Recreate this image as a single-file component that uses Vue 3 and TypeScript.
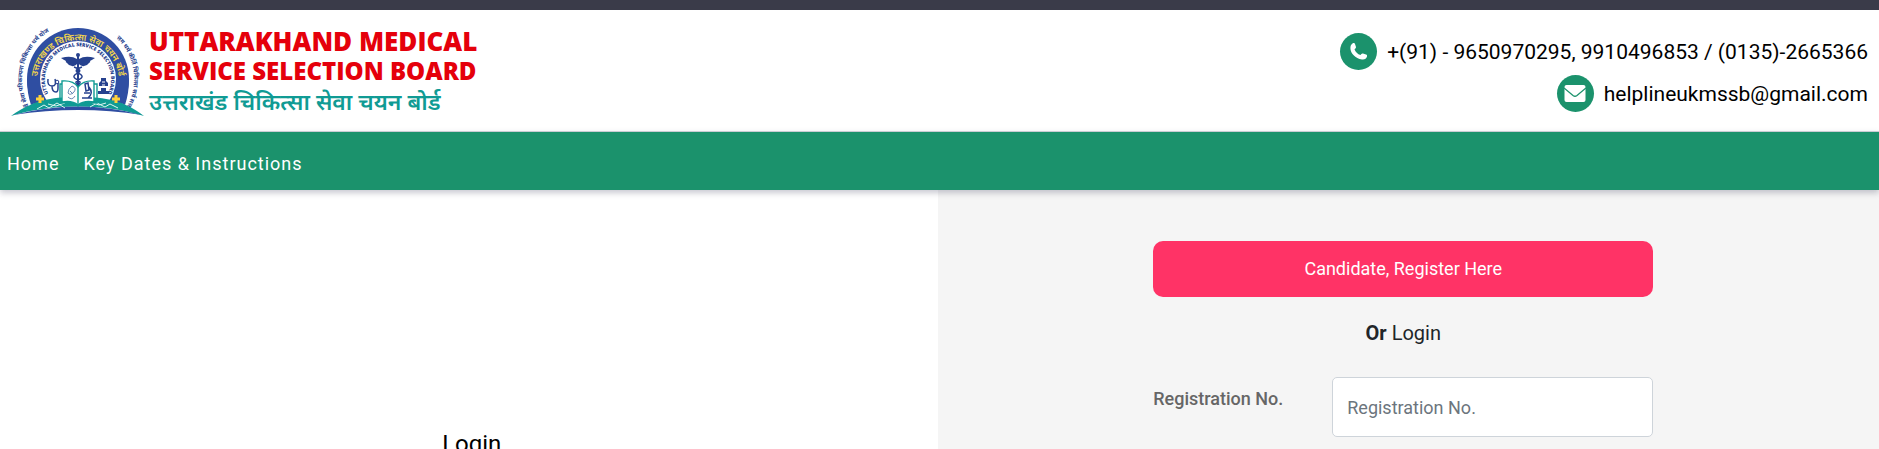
<script setup lang="ts">
import { ref } from 'vue'

interface NavLink {
  label: string
  href: string
}

const links: NavLink[] = [
  { label: 'Home', href: '#home' },
  { label: 'Key Dates & Instructions', href: '#key-dates' },
]

const registrationNo = ref('')
</script>

<template>
  <div class="page">
    <div class="topbar"></div>
    <header class="header">
      <a class="brand" href="#home">
        <svg class="emblem" viewBox="12 26 134 92" aria-hidden="true">
          <defs>
            <path id="arc-hindi" d="M40 94A41 41 0 1 1 118 94" />
            <path id="arc-english" d="M50 95A33 33 0 1 1 108 95" />
            <path id="arc-left" d="M30 106A56 56 0 0 1 51 31" />
            <path id="arc-right" d="M116 37A56 56 0 0 1 127 108" />
          </defs>
          <circle cx="79" cy="79" r="51" fill="#2f4ea2" />
          <circle cx="79" cy="79" r="38" fill="#fff" />
          <text class="motto" font-size="6"><textPath href="#arc-left" startOffset="50%" text-anchor="middle">सर्वे सेवा परिकल्पना चिकित्सा धर्म योजना</textPath></text>
          <text class="motto" font-size="6"><textPath href="#arc-right" startOffset="50%" text-anchor="middle">उत्तम धर्म कीर्ति चिकित्सा सर्व सत्तम</textPath></text>
          <text class="ring-hindi" font-size="9"><textPath href="#arc-hindi" startOffset="50%" text-anchor="middle">उत्तराखण्ड चिकित्सा सेवा चयन बोर्ड</textPath></text>
          <text class="ring-english" font-size="5"><textPath href="#arc-english" startOffset="50%" text-anchor="middle">UTTARAKHAND MEDICAL SERVICE SELECTION BOARD</textPath></text>
          <path d="M28 108Q79 90 130 108V118H28Z" fill="#fff" />
          <path d="M28 79h13v21l-9 5q-4-12-4-26M130 79h-13v21l9 5q4-12 4-26" fill="#2f4ea2" />
          <path d="M12 116C37 98 58 97 79 97s43 1 66 19C102 103 51 104 12 116Z" fill="#109b94" />
          <path d="M14 115Q80 98 143 115Q80 105 14 115" fill="#2f4ea2" />
          <path d="M38 109l7-4 5 3 8-5 8 5M119 108l-8-4-5 3-8-4-7 4M49 104l8 2 9-3M107 103l-7 2-9-3" fill="none" stroke="#dff5f1" stroke-width="1" />
          <path d="M79 55v32" stroke="#26418e" stroke-width="2" />
          <circle cx="79" cy="55" r="2" fill="#26418e" />
          <path d="M78 59Q72 55 62 58q3 2 5 3-1 1 1 2 2 3 5 3 3 1 6-3 3 4 6 3 3 0 5-3 2-1 1-2 2-1 5-3-10-3-16 1Z" fill="#26418e" />
          <path d="M75 67q9 3 4 6-7 3-2 6 7 3 2 6-4 2-1 5M83 67q-9 3-4 6 7 3 2 6-7 3-2 6 4 2 1 5" fill="none" stroke="#26418e" stroke-width="1.400" />
          <path d="M63 81Q74 80 79 87 85 80 95 81V102Q85 100 79 105 73 100 63 102Z" fill="#fff" stroke="#109b94" stroke-width="1.400" />
          <path d="M79 87v18M63 84h-2v19q12-2 18 3 6-5 19-3V84h-3" fill="none" stroke="#109b94" stroke-width="1.400" />
          <path d="M49 79q-1 7 4 7t3-7M53 86q0 6 4 6 2 0 2-4V83" fill="none" stroke="#26418e" stroke-width="1.500" />
          <circle cx="58" cy="82" r="1.800" fill="none" stroke="#26418e" />
          <path d="M69 93q0-4 4-7 5 2 2 6-4 4-6 1ZM69 97q4 4 7-1M71 91l3 3" fill="none" stroke="#6c8ab7" />
          <path d="M86 84l3-1 1 7-3 1ZM90 87q5 6-1 11M83 98h10M85 93h6" fill="none" stroke="#26418e" stroke-width="1.500" />
          <path d="M102 78h5v3l2 2v3h-9v-3l2-2ZM99 91h3v-3h5v3h3v3h-11ZM104 86v4" fill="#26418e" />
          <path d="M103 82h3M103 85h3" stroke="#fff" />
          <path d="M37 99h8M41 95v8M113 99h8M117 95v8" stroke="#ffd23b" stroke-width="3" />
        </svg>
        <span class="brand-text">
          <span class="brand-line first">UTTARAKHAND MEDICAL</span>
          <span class="brand-line second">SERVICE SELECTION BOARD</span>
          <span class="brand-line hindi" lang="hi">उत्तराखंड चिकित्सा सेवा चयन बोर्ड</span>
        </span>
      </a>
      <address class="contacts">
        <a class="contact" href="tel:+919650970295">
          <span class="badge">
            <svg width="17" height="17" viewBox="0 0 17 17" aria-hidden="true">
              <path d="M1 2 3 0q1.500-.500 2 1l1 3q.200 1.500-1.500 2.200Q6 10.500 10.500 12q1-2 2.500-1.500l3 1q1.500.500 1 2-1 3.500-5 3C4 15.500-1.500 8 1 2Z" fill="#fff" />
            </svg>
          </span>
          <span>+(91) - 9650970295, 9910496853 / (0135)-2665366</span>
        </a>
        <a class="contact" href="mailto:helplineukmssb@gmail.com">
          <span class="badge">
            <svg width="22" height="17" viewBox="0 0 22 17" aria-hidden="true">
              <rect x="0.500" width="21" height="17" rx="2" fill="#fff" />
              <path d="M0 3 9 10.500q2 1.500 4 0L22 3" fill="none" stroke="#1b926c" stroke-width="1.300" />
            </svg>
          </span>
          <span>helplineukmssb@gmail.com</span>
        </a>
      </address>
    </header>
    <nav class="nav">
      <a v-for="link in links" :key="link.href" :href="link.href">{{ link.label }}</a>
    </nav>
    <main class="main">
      <section class="intro">
        <h1>Login</h1>
      </section>
      <section class="panel">
        <form class="form" @submit.prevent>
          <button class="register" type="button">Candidate, Register Here</button>
          <p class="or"><strong>Or</strong> Login</p>
          <div class="field">
            <label for="registration-no">Registration No.</label>
            <input id="registration-no" v-model="registrationNo" type="text" placeholder="Registration No." />
          </div>
        </form>
      </section>
    </main>
  </div>
</template>

<style>
body {
  margin: 0;
  overflow: hidden;
}
</style>

<style scoped>
.page {
  box-sizing: border-box;
  display: flex;
  flex-direction: column;
  min-height: 100vh;
  background: #fff;
  color: #212529;
  font-family: Roboto, "Liberation Sans", sans-serif;
}
.page * {
  box-sizing: border-box;
}
.topbar {
  height: 10px;
  background: #3a3b49;
}
.header {
  display: flex;
  justify-content: space-between;
  padding: 16px 11px 13px;
}
.brand {
  display: flex;
  gap: 4px;
  text-decoration: none;
}
.emblem {
  width: 134px;
  height: 92px;
}
.motto {
  fill: #26418e;
  font-weight: 700;
  font-family: "Noto Sans", sans-serif;
}
.ring-hindi {
  fill: #f5d84b;
  font-weight: 600;
  font-family: "Noto Sans", sans-serif;
}
.ring-english {
  fill: #26418e;
  font-weight: 800;
  font-family: "Open Sans", sans-serif;
}
.brand-text {
  display: flex;
  flex-direction: column;
  white-space: nowrap;
}
.brand-line {
  color: #e5000b;
  font-family: "Open Sans", "Noto Sans", sans-serif;
  font-weight: 800;
  line-height: 30px;
}
.first {
  font-size: 26px;
}
.second {
  font-size: 24px;
}
.hindi {
  color: #109b94;
  font-size: 23px;
  font-weight: 600;
}
.contacts {
  display: flex;
  flex-direction: column;
  align-items: flex-end;
  gap: 5px;
  padding-top: 7px;
  font-style: normal;
}
.contact {
  display: flex;
  align-items: center;
  gap: 10px;
  color: #000;
  font-size: 21px;
  line-height: 24px;
  text-decoration: none;
}
.badge {
  display: grid;
  place-items: center;
  width: 37px;
  height: 37px;
  border-radius: 50%;
  background: #1b926c;
}
.nav {
  position: relative;
  display: flex;
  align-items: center;
  gap: 24px;
  height: 59px;
  padding: 6px 7px 0;
  border-top: 1px solid #c9ccd3;
  background: #1b926c;
  box-shadow: 0 3px 6px rgba(40, 40, 70, 0.25);
}
.nav a {
  color: #fff;
  font-size: 18px;
  letter-spacing: 1px;
  line-height: 24px;
  text-decoration: none;
}
.main {
  display: grid;
  flex: 1;
  grid-template-columns: calc(50% - 2px) 1fr;
}
.intro {
  padding: 240px 0 0 6px;
  height: 259px;
}
h1 {
  margin: 0;
  color: #000;
  font-size: 24px;
  font-weight: 400;
  line-height: 28px;
  text-align: center;
}
.panel {
  padding: 51px 10px 12px 0;
  background: #f5f5f5;
}
.form {
  width: 100%;
  max-width: 500px;
  margin: 0 auto;
}
.register {
  display: block;
  width: 100%;
  height: 56px;
  border: 0;
  border-radius: 10px;
  background: #ff3366;
  color: #fff;
  font: 400 18px/24px Roboto, "Liberation Sans", sans-serif;
}
.or {
  margin: 24px 0 32px;
  font-size: 20px;
  line-height: 24px;
  text-align: center;
}
.field {
  display: grid;
  grid-template-columns: 1fr 321px;
}
label {
  padding-top: 10px;
  color: #666;
  font-size: 18px;
  font-weight: 500;
  line-height: 24px;
}
input {
  width: 100%;
  height: 60px;
  padding: 0 14px;
  border: 1px solid #ced4da;
  border-radius: 5px;
  background: #fff;
  color: #212529;
  font: 400 18px/24px Roboto, "Liberation Sans", sans-serif;
}
input::placeholder {
  color: #6c757d;
  opacity: 1;
}
</style>
